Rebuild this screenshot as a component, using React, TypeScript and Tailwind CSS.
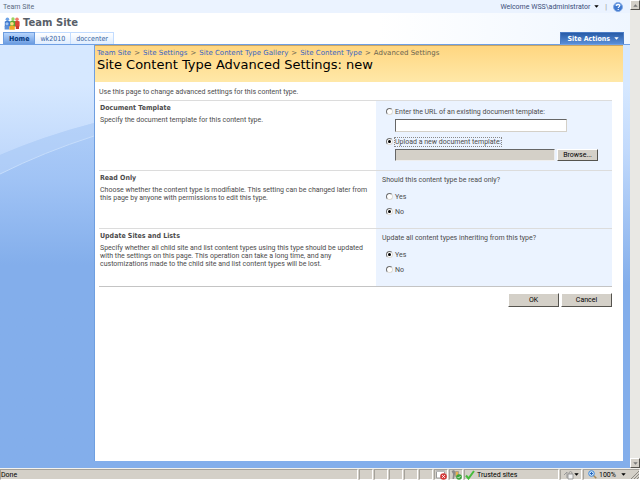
import { useState } from 'react';
import type { ReactNode } from 'react';

const crumbs = ['Team Site', 'Site Settings', 'Site Content Type Gallery', 'Site Content Type'];

const bevel = 'border border-t-white border-l-white border-r-[#55534e] border-b-[#55534e] bg-[#d4d0c8] text-black';

function PeopleLogo() {
  return (
    <svg className="h-[13px] w-4 shrink-0" viewBox="0 0 16 13" aria-hidden="true">
      <circle cx="3.4" cy="2.2" r="1.8" fill="#6ea3e6" />
      <path d="M0.8 4.6q2.600-1.600 5.400 0v4.800H0.800z" fill="#3f78cc" />
      <circle cx="13" cy="2.2" r="1.8" fill="#f07c6c" />
      <path d="M10.400 4.600q2.600-1.600 5.200 0v5h-5.200z" fill="#dc4436" />
      <circle cx="9" cy="2" r="1.700" fill="#9bd463" />
      <path d="M6.200 4.300q2.500-1.500 5 0v5.500h-5z" fill="#5da832" />
      <circle cx="3" cy="6.800" r="1.600" fill="#a4c6f3" />
      <path d="M0.600 9q2.400-1.500 4.800 0v3.600H0.600z" fill="#5d8fd8" />
      <circle cx="8" cy="6.800" r="1.800" fill="#ffdf80" />
      <path d="M5.400 9.200q2.700-1.600 5.400 0v3.600H5.400z" fill="#f2aa24" />
      <path d="M11.800 9h3.200v3h-3.200z" fill="#c93a30" />
    </svg>
  );
}

function Caret({ className = '' }: { className?: string }) {
  return (
    <svg className={`h-[3px] w-[5px] shrink-0 ${className}`} viewBox="0 0 5 3" aria-hidden="true">
      <path d="M0.3 0.2h4.4L2.5 2.8z" fill="currentColor" />
    </svg>
  );
}

function HelpIcon() {
  return (
    <svg className="size-[10px]" viewBox="0 0 10 10" aria-hidden="true">
      <circle cx="5" cy="5" r="4.5" fill="#3f78cf" stroke="#86abe4" />
      <path d="M1.5 3.5a4 4 0 0 1 7 0z" fill="#9cc2f3" />
      <path d="M3.5 3.9c0-2 3.2-2 3.2-.1 0 1.100-1.500 1.100-1.500 2.300M5.200 7.100v1" fill="none" stroke="#fff" strokeWidth="1.100" />
    </svg>
  );
}

function SideWave() {
  return (
    <svg className="h-[250px] w-full" viewBox="0 0 94 250" preserveAspectRatio="none" aria-hidden="true">
      <defs>
        <linearGradient id="wave" x1="0" y1="78" x2="0" y2="220" gradientUnits="userSpaceOnUse">
          <stop offset="0" stopColor="#aecdf8" />
          <stop offset="0.400" stopColor="#a0c3f5" />
          <stop offset="1" stopColor="#83aeeb" />
        </linearGradient>
      </defs>
      <path d="M0 110Q44 91 94 78V250H0z" fill="url(#wave)" />
      <path d="M0 129Q44 107 94 91V78Q44 91 0 110z" fill="#bcd6fa" opacity="0.5" />
      <path d="M0 129Q44 107 94 91" fill="none" stroke="#c6ddfb" />
    </svg>
  );
}

type RadioProps = { name: string; label: string; checked: boolean; onSelect: () => void; focused?: boolean };

function Radio({ name, label, checked, onSelect, focused }: RadioProps) {
  return (
    <label className="flex h-[9px] items-center gap-0.5">
      <input
        type="radio"
        name={name}
        checked={checked}
        onChange={onSelect}
        className="flex size-[7px] shrink-0 appearance-none items-center justify-center rounded-full border border-t-[#6f6f6f] border-r-[#dedbd5] border-b-[#dedbd5] border-l-[#6f6f6f] bg-white checked:before:size-[3px] checked:before:rounded-full checked:before:bg-black"
      />
      <span className={focused ? 'outline outline-dotted outline-[#888]' : ''}>{label}</span>
    </label>
  );
}

type SectionProps = { title: string; text: string; children: ReactNode };

function Section({ title, text, children }: SectionProps) {
  return (
    <section className="flex border-t border-[#dcdcdc]">
      <div className="flex-1 pt-[3px] pr-2 pl-px">
        <h2 className="font-bold font-['DejaVu_Sans_Condensed','DejaVu_Sans',sans-serif]">{title}</h2>
        <p className="mt-1">{text}</p>
      </div>
      <div className="w-[46%] shrink-0 bg-[#ebf3ff] pl-1.5">{children}</div>
    </section>
  );
}

function StatusCell({ className = '', children }: { className?: string; children?: ReactNode }) {
  return (
    <div className={`flex h-[11px] items-center border border-t-[#a5a29b] border-r-white border-b-white border-l-[#a5a29b] ${className}`}>
      {children}
    </div>
  );
}

function StatusBar() {
  return (
    <footer className="flex h-3 items-center gap-px border-t border-[#f4f2ed] bg-[#d4d0c8] leading-[10px] text-black">
      <StatusCell className="flex-1">Done</StatusCell>
      <StatusCell className="w-3.5" />
      <StatusCell className="w-3.5" />
      <StatusCell className="w-3.5" />
      <StatusCell className="w-3.5" />
      <StatusCell className="w-3.5" />
      <StatusCell className="w-3.5 justify-center">
        <svg className="h-[10px] w-[11px]" viewBox="0 0 11 10" aria-hidden="true">
          <path d="M0.5 1h8v7h-8z" fill="#fff" stroke="#9a9a9a" />
          <path d="M0 0.500h9v1.500H0z" fill="#bbb" />
          <circle cx="7.500" cy="6.500" r="3.300" fill="#d43b3b" />
          <path d="M6.200 5.200l2.600 2.600M8.800 5.200L6.200 7.800" stroke="#fff" />
        </svg>
      </StatusCell>
      <StatusCell className="w-3.5 justify-center">
        <svg className="h-[10px] w-[11px]" viewBox="0 0 11 10" aria-hidden="true">
          <path d="M0.500 1l2.500-1 1.500 2L3 9H1.500L2 4z" fill="#8a8a8a" />
          <path d="M4.500 1.500h3v5h-3z" fill="#e8b250" stroke="#8c8c8c" strokeWidth="0.600" />
          <circle cx="8" cy="7" r="2.800" fill="#3aa33a" />
          <path d="M6.600 7l1 1.100 1.900-2" fill="none" stroke="#fff" strokeWidth="0.800" />
        </svg>
      </StatusCell>
      <StatusCell className="w-[95px] gap-0.5">
        <svg className="h-[10px] w-[10px]" viewBox="0 0 10 10" aria-hidden="true">
          <path d="M1 5.500l2.500 3L9 1" fill="none" stroke="#46bc3c" strokeWidth="2" />
        </svg>
        Trusted sites
      </StatusCell>
      <StatusCell className="w-[22px] justify-between px-0.5">
        <svg className="h-[10px] w-[11px]" viewBox="0 0 11 10" aria-hidden="true">
          <path d="M1 5l3-3v6M6 4V2.500q1.500-2 3 0V4" fill="none" stroke="#999" />
          <path d="M5 4h5v5H5z" fill="#f1f1f1" stroke="#8b8b8b" strokeWidth="0.800" />
        </svg>
        <Caret />
      </StatusCell>
      <StatusCell className="w-[57px] pl-1">
        <button type="button" className="flex flex-1 items-center gap-0.5">
          <svg className="size-[9px]" viewBox="0 0 9 9" aria-hidden="true">
            <path d="M5.500 5.500L8.300 8.300" stroke="#a88a58" strokeWidth="1.500" />
            <circle cx="3.500" cy="3.500" r="2.800" fill="#cfe5fb" stroke="#3c86d6" />
            <path d="M3.500 2v3M2 3.500h3" stroke="#2567bd" />
          </svg>
          <span className="flex-1 text-left">100%</span>
          <Caret />
        </button>
        <svg className="ml-1 size-[9px] self-end" viewBox="0 0 9 9" aria-hidden="true">
          <path d="M1 9L9 1M4 9L9 4M7 9L9 7" stroke="#8d8a84" />
        </svg>
      </StatusCell>
    </footer>
  );
}

export default function App() {
  const [source, setSource] = useState('upload');
  const [readOnly, setReadOnly] = useState('no');
  const [update, setUpdate] = useState('yes');
  const [url, setUrl] = useState('');

  return (
    <div className="flex min-h-screen flex-col bg-white font-[Roboto,'Liberation_Sans',sans-serif] text-[7px] leading-[8px] text-[#4c4c4c]">
      <div className="flex flex-1">
        <div className="flex min-w-0 flex-1 flex-col">
          <header>
            <div className="flex h-[13px] items-center justify-between bg-[#ebf3ff] pr-[7px] pl-[3px]">
              <a href="#" className="text-[#5a6a7d]">Team Site</a>
              <div className="flex items-center gap-1.5">
                <button type="button" className="flex items-center gap-1 text-[#3a4d78]">
                  Welcome WSS\administrator
                  <Caret className="text-black" />
                </button>
                <span className="text-[#888]">|</span>
                <button type="button" aria-label="Help"><HelpIcon /></button>
              </div>
            </div>
            <div className="bg-linear-to-r from-white from-60% to-[#eff6ff]">
              <div className="flex h-[19px] items-center gap-[3px] pt-px pl-1">
                <PeopleLogo />
                <span className="text-[10px] leading-3 font-bold text-[#595f69] font-['DejaVu_Sans',sans-serif]">Team Site</span>
              </div>
              <div className="flex h-3 items-stretch justify-between pr-1.5 pl-[3px] font-['DejaVu_Sans_Condensed','DejaVu_Sans',sans-serif]">
                <nav className="flex">
                  <a href="#" className="flex items-center border border-b-0 border-[#6d9ddf] bg-linear-to-b from-[#b7d5fc] to-[#6a9be0] px-[5px] font-bold text-[#00357c]">Home</a>
                  <a href="#" className="flex items-center border-t border-r border-[#c2dcff] bg-linear-to-b from-white to-[#dfedff] px-[5px] text-[#3764a0]">wk2010</a>
                  <a href="#" className="flex items-center border-t border-r border-[#c2dcff] bg-linear-to-b from-white to-[#dfedff] px-[5px] text-[#3764a0]">doccenter</a>
                </nav>
                <button type="button" className="flex items-center gap-1 border border-b-0 border-[#4b7cc5] bg-linear-to-b from-[#285ca8] to-[#5a8fd8] pr-1 pl-1.5 font-bold text-white">
                  Site Actions
                  <Caret />
                </button>
              </div>
            </div>
          </header>

          <div className="flex flex-1 border-t border-[#6fa0e4] bg-linear-to-b from-[#d6e8ff] from-[40px] via-[#c2dafc] via-[105px] to-[#83aeeb] to-[240px] pr-[7px] pb-[7px]">
            <aside className="w-[94px] shrink-0">
              <SideWave />
            </aside>
            <main className="min-w-0 flex-1 border-l border-[#6f9fe0] bg-white">
              <div className="h-[37px] border-t border-[#c9a563] bg-linear-to-b from-[#ffd680] to-[#ffe8a8] pt-[3px] pl-0.5 font-['DejaVu_Sans',Verdana,sans-serif]">
                <nav aria-label="Breadcrumb" className="flex gap-[3px] text-[#6b6450]">
                  {crumbs.map((crumb) => (
                    <span key={crumb} className="flex gap-[3px]">
                      <a href="#" className="text-[#3763c4]">{crumb}</a>
                      <span>&gt;</span>
                    </span>
                  ))}
                  <span>Advanced Settings</span>
                </nav>
                <h1 className="text-[13px] leading-4 text-black">Site Content Type Advanced Settings: new</h1>
              </div>

              <form className="pr-[11px] pl-1" onSubmit={(e) => e.preventDefault()}>
                <p className="pt-1.5 pb-1">Use this page to change advanced settings for this content type.</p>

                <Section title="Document Template" text="Specify the document template for this content type.">
                  <div className="pt-1.5 pb-[9px] pl-1">
                    <Radio name="source" label="Enter the URL of an existing document template:" checked={source === 'url'} onSelect={() => setSource('url')} />
                    <input
                      type="text"
                      aria-label="Template URL"
                      value={url}
                      onChange={(e) => setUrl(e.target.value)}
                      className="mt-[3px] ml-[9px] block h-[13px] w-[172px] border border-t-[#666] border-r-[#d4d0c8] border-b-[#d4d0c8] border-l-[#666] bg-white px-0.5"
                    />
                    <div className="mt-[5px]">
                      <Radio name="source" label="Upload a new document template:" checked={source === 'upload'} onSelect={() => setSource('upload')} focused />
                    </div>
                    <div className="mt-[3px] ml-[9px] flex gap-0.5">
                      <input
                        type="text"
                        aria-label="Template file"
                        readOnly
                        className="h-3 w-[160px] border border-t-[#666] border-r-[#eee] border-b-[#eee] border-l-[#666] bg-[#d4d0c8]"
                      />
                      <button type="button" className={`h-3 w-[41px] ${bevel}`}>Browse...</button>
                    </div>
                  </div>
                </Section>

                <Section
                  title="Read Only"
                  text="Choose whether the content type is modifiable. This setting can be changed later from this page by anyone with permissions to edit this type."
                >
                  <fieldset className="pt-[5px] pb-3">
                    <legend className="float-left w-full">Should this content type be read only?</legend>
                    <div className="clear-both flex flex-col gap-1.5 pt-2 pl-1">
                      <Radio name="readonly" label="Yes" checked={readOnly === 'yes'} onSelect={() => setReadOnly('yes')} />
                      <Radio name="readonly" label="No" checked={readOnly === 'no'} onSelect={() => setReadOnly('no')} />
                    </div>
                  </fieldset>
                </Section>

                <Section
                  title="Update Sites and Lists"
                  text="Specify whether all child site and list content types using this type should be updated with the settings on this page. This operation can take a long time, and any customizations made to the child site and list content types will be lost."
                >
                  <fieldset className="pt-[5px] pb-3">
                    <legend className="float-left w-full">Update all content types inheriting from this type?</legend>
                    <div className="clear-both flex flex-col gap-1.5 pt-2 pl-1">
                      <Radio name="update" label="Yes" checked={update === 'yes'} onSelect={() => setUpdate('yes')} />
                      <Radio name="update" label="No" checked={update === 'no'} onSelect={() => setUpdate('no')} />
                    </div>
                  </fieldset>
                </Section>

                <div className="flex justify-end gap-0.5 border-t border-[#c4c4c4] pt-1.5">
                  <button type="submit" className={`h-3.5 w-[51px] ${bevel}`}>OK</button>
                  <button type="button" className={`h-3.5 w-[51px] ${bevel}`}>Cancel</button>
                </div>
              </form>
            </main>
          </div>
        </div>

        <div className="flex w-[10px] shrink-0 flex-col justify-between bg-[#e9e8e4]">
          <button type="button" aria-label="Scroll up" className={`flex h-[10px] items-center justify-center ${bevel}`}>
            <Caret className="rotate-180 text-[#777]" />
          </button>
          <button type="button" aria-label="Scroll down" className={`flex h-[10px] items-center justify-center ${bevel}`}>
            <Caret className="text-[#777]" />
          </button>
        </div>
      </div>
      <StatusBar />
    </div>
  );
}
